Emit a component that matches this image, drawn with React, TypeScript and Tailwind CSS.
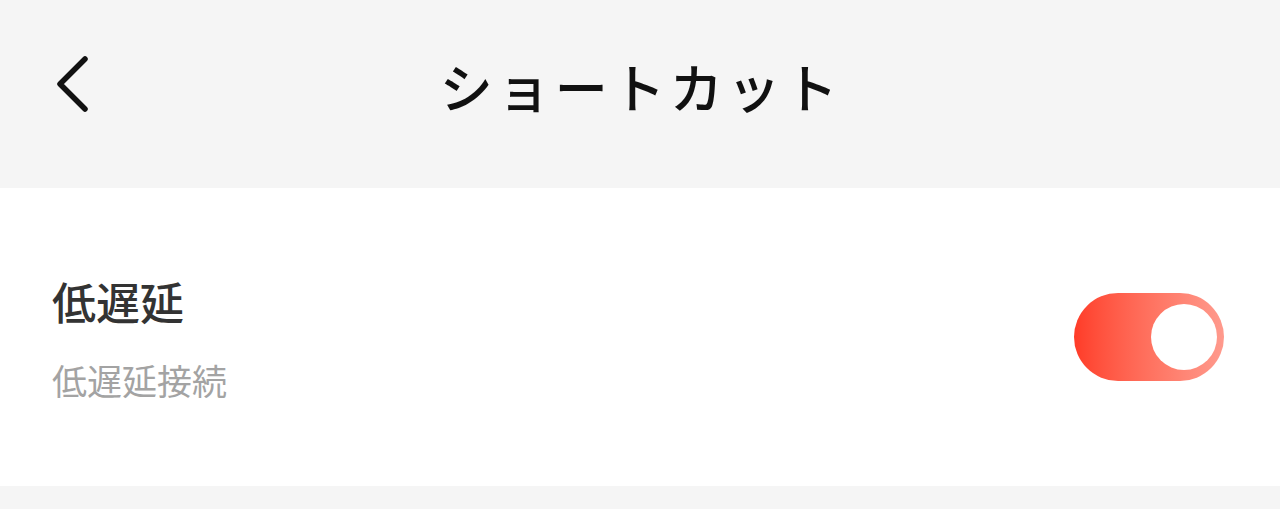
import React from "react";

export default function App() {
  const jp = { fontFamily: '"Noto Sans CJK JP", "Noto Sans", sans-serif' };
  return (
    <div className="w-[1280px] h-[509px] bg-[#f5f5f5] flex flex-col" style={jp}>
      <div className="h-[188px] flex items-center relative">
        <div className="absolute left-[50px] top-[54px] w-[44px] h-[62px] flex items-center justify-center">
          <svg width="40" height="62" viewBox="0 0 40 62" fill="none">
            <path d="M33 5 L8 30 L33 55" stroke="#111" strokeWidth="5.5" strokeLinecap="round" strokeLinejoin="round" />
          </svg>
        </div>
        <div className="flex-1 text-center text-[53px] font-medium tracking-[4.5px] text-[#111] leading-none pb-[16px] pl-[2px]">
          ショートカット
        </div>
      </div>
      <div className="h-[298px] bg-white flex items-center px-[52px]">
        <div className="flex-1 flex flex-col">
          <div className="text-[44px] font-medium leading-none text-[#333] mt-[2px]">低遅延</div>
          <div className="text-[35px] leading-none text-[#a3a3a3] mt-[39px]">低遅延接続</div>
        </div>
        <div className="w-[150px] h-[88px] rounded-full bg-gradient-to-r from-[#ff3b27] to-[#ff9a8d] flex items-center justify-end pr-[7px] mr-[4px]">
          <div className="w-[66px] h-[66px] rounded-full bg-white" />
        </div>
      </div>
    </div>
  );
}
